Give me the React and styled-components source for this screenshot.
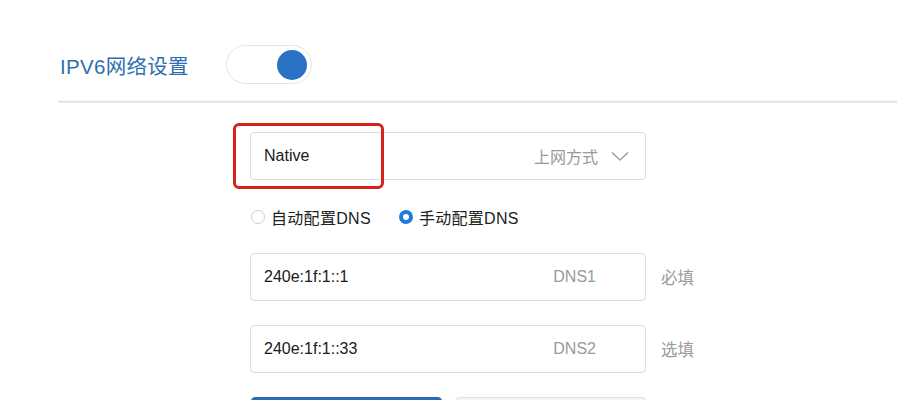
import React from "react";
import styled, { createGlobalStyle } from "styled-components";

const Global = createGlobalStyle`
  html, body { margin: 0; padding: 0; background: #fff; }
  body { font-family: "Helvetica Neue", "Liberation Sans", Arial, "Noto Sans CJK SC", sans-serif; overflow: hidden; }
`;

const Page = styled.div`
  width: 897px;
  height: 400px;
  overflow: hidden;
  padding-top: 45px;
  box-sizing: border-box;
`;

const Header = styled.div`
  display: flex;
  align-items: center;
  padding-left: 60px;
  height: 39px;
  gap: 37px;
`;

const Title = styled.h1`
  margin: 0;
  font-size: 20.5px;
  font-weight: 400;
  color: #2d6fb0;
  font-family: "Liberation Sans", "Noto Sans CJK SC", sans-serif;
  letter-spacing: 0.3px;
`;

const Toggle = styled.div`
  width: 86px;
  height: 39px;
  border: 1.5px solid #e4e4e4;
  border-radius: 20px;
  box-sizing: border-box;
  display: flex;
  align-items: center;
  justify-content: ${p => (p.$on ? "flex-end" : "flex-start")};
  padding: 0 4px;
  background: #fff;
`;

const Knob = styled.div`
  width: 30px;
  height: 30px;
  border-radius: 50%;
  background: #2a73c4;
`;

const Divider = styled.div`
  margin: 16px 0 0 58px;
  height: 2px;
  background: #e6e6e6;
  border-top: 1px solid #f3f3f3;
`;

const Form = styled.div`
  margin-left: 250px;
  margin-top: 29px;
  display: flex;
  flex-direction: column;
`;

const FieldRow = styled.div`
  display: flex;
  align-items: center;
  margin-bottom: ${p => p.$mb || 0}px;
  position: relative;
`;

const Field = styled.div`
  width: 396px;
  height: 48px;
  box-sizing: border-box;
  border: 1px solid #dcdcdc;
  border-radius: 4px;
  display: flex;
  align-items: center;
  padding: 0 15px 0 13px;
  font-size: 16px;
  background: #fff;
`;

const Value = styled.span`
  flex: 1;
  color: #1a1a1a;
`;

const Hint = styled.span`
  color: #9a9a9a;
  font-size: 16px;
  margin-right: ${p => p.$mr || 0}px;
`;

const Chevron = styled.svg`
  margin-left: 12px;
`;

const Side = styled.span`
  color: #9a9a9a;
  font-size: 16.5px;
  margin-left: 15px;
`;

const Highlight = styled.div`
  position: absolute;
  left: -17px;
  top: -9px;
  width: 151px;
  height: 66px;
  box-sizing: border-box;
  border: 3px solid #d9211e;
  border-radius: 6px;
  pointer-events: none;
`;

const RadioRow = styled.div`
  display: flex;
  align-items: center;
  gap: 28px;
  height: 20px;
  margin: 27px 0 26px 1px;
`;

const RadioLabel = styled.label`
  display: flex;
  align-items: center;
  gap: 6px;
  font-size: 16px;
  letter-spacing: 0.3px;
  color: #222;
`;

const RadioDot = styled.span`
  width: 14px;
  height: 14px;
  box-sizing: border-box;
  border-radius: 50%;
  border: ${p => (p.$checked ? "4px solid #1f7ae0" : "1px solid #cfcfcf")};
  background: #fff;
  display: inline-block;
`;

const Buttons = styled.div`
  display: flex;
  gap: 13px;
  margin-top: 24px;
  margin-left: 1px;
`;

const Button = styled.div`
  width: 191px;
  height: 40px;
  border-radius: 4px;
  box-sizing: border-box;
  background: ${p => (p.$primary ? "#2a6bb8" : "#f5f5f5")};
  border: 1px solid ${p => (p.$primary ? "#2a6bb8" : "#e2e2e2")};
`;

export default function App() {
  return (
    <>
      <Global />
      <Page>
        <Header>
          <Title>IPV6网络设置</Title>
          <Toggle $on>
            <Knob />
          </Toggle>
        </Header>
        <Divider />
        <Form>
          <FieldRow $mb={0}>
            <Field>
              <Value>Native</Value>
              <Hint>上网方式</Hint>
              <Chevron width="20" height="12" viewBox="0 0 20 12">
                <path d="M2 2.5 L10 10 L18 2.5" fill="none" stroke="#a0a0a0" strokeWidth="1.5" />
              </Chevron>
            </Field>
            <Highlight />
          </FieldRow>
          <RadioRow>
            <RadioLabel>
              <RadioDot />
              自动配置DNS
            </RadioLabel>
            <RadioLabel>
              <RadioDot $checked />
              手动配置DNS
            </RadioLabel>
          </RadioRow>
          <FieldRow $mb={24}>
            <Field>
              <Value>240e:1f:1::1</Value>
              <Hint $mr={34}>DNS1</Hint>
            </Field>
            <Side>必填</Side>
          </FieldRow>
          <FieldRow>
            <Field>
              <Value>240e:1f:1::33</Value>
              <Hint $mr={34}>DNS2</Hint>
            </Field>
            <Side>选填</Side>
          </FieldRow>
          <Buttons>
            <Button $primary />
            <Button />
          </Buttons>
        </Form>
      </Page>
    </>
  );
}
